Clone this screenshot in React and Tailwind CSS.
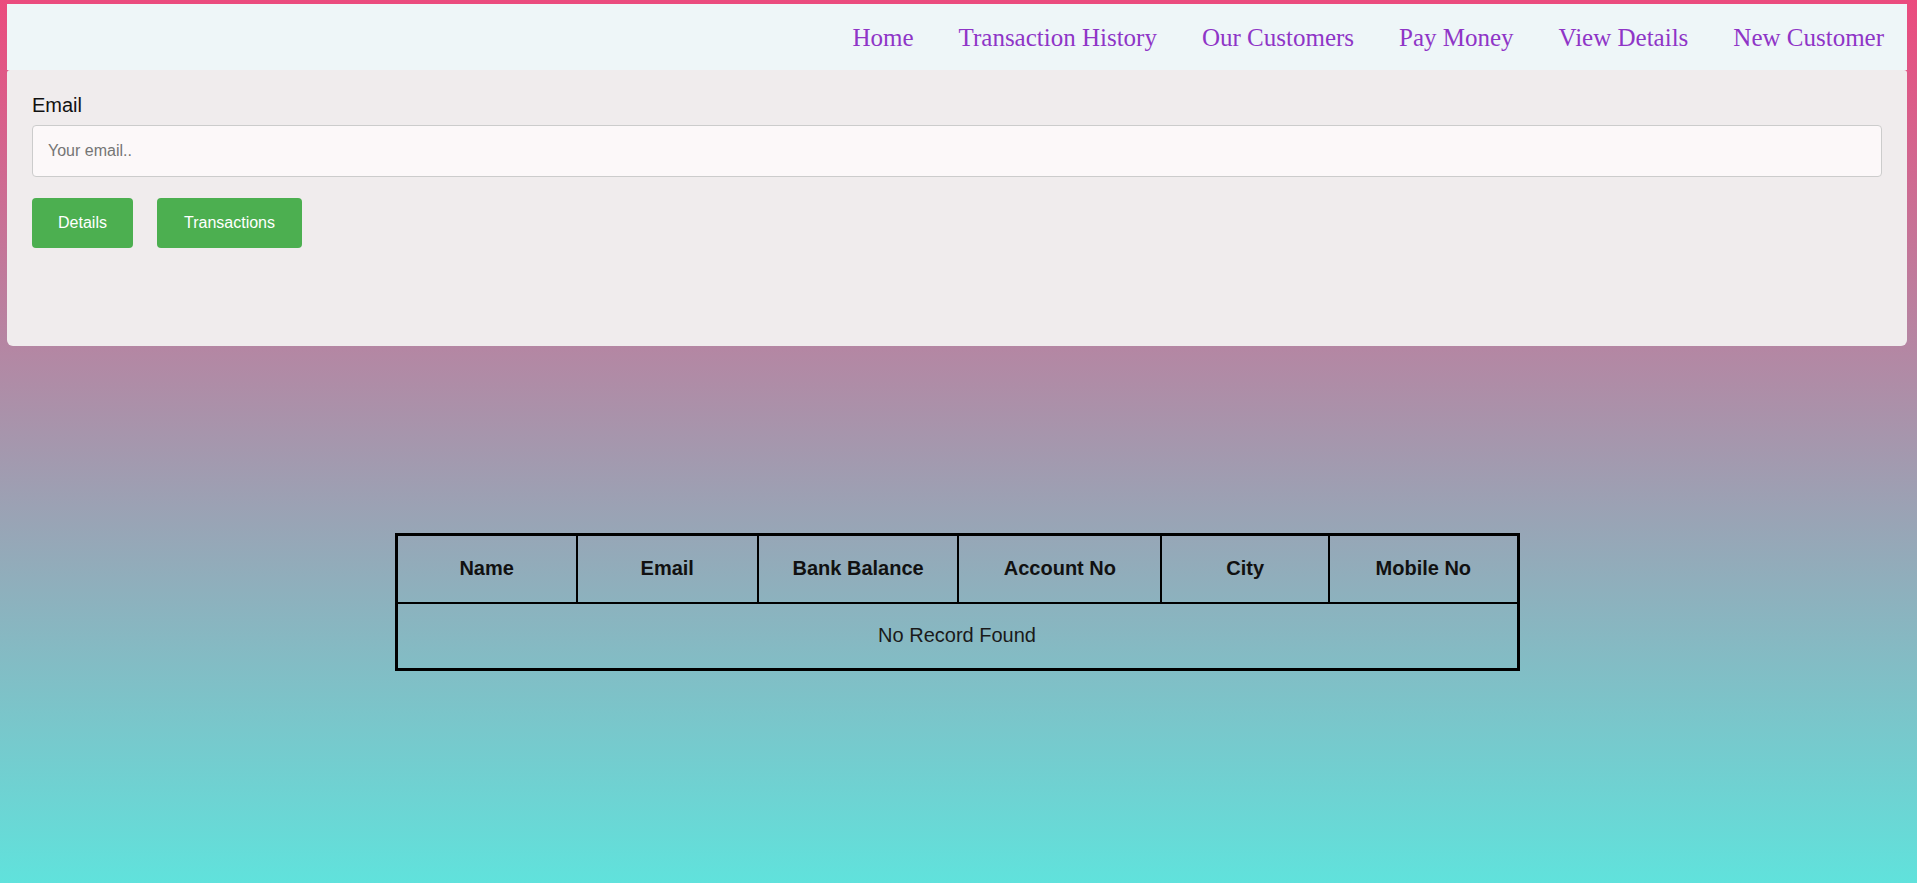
const links = ['Home', 'Transaction History', 'Our Customers', 'Pay Money', 'View Details', 'New Customer'];
const cols = [
  { label: 'Name', w: 'w-[181px]' },
  { label: 'Email', w: 'w-[181px]' },
  { label: 'Bank Balance', w: 'w-[201px]' },
  { label: 'Account No', w: 'w-[203px]' },
  { label: 'City', w: 'w-[168px]' },
  { label: 'Mobile No', w: 'w-[189px]' },
];

const App = () => {
  return (
    <div className="min-h-[883px] bg-[linear-gradient(to_bottom,#eb4b7e,#60e2dc)] pt-[4px] pl-[7px] pr-[10px] font-['Liberation_Sans',Arial,sans-serif]">
      <nav className="h-[66px] bg-[#eef6f8] flex items-center justify-end pr-[23px] pt-[2px]">
        <ul className="flex gap-[45px] font-['Liberation_Serif',serif] text-[25px] text-[#8f35c7]">
          {links.map((l) => (
            <li key={l}><a href="#" className="block">{l}</a></li>
          ))}
        </ul>
      </nav>

      <div className="h-[276px] bg-[#f0eced] rounded-md rounded-t-[3px] px-[25px] pt-[23px]">
        <label className="block text-[20px] text-[#111] leading-[24px] mb-[8px]">Email</label>
        <input
          type="text"
          placeholder="Your email.."
          className="block w-full h-[52px] bg-[#fcf8f9] border border-[#ccc] rounded-[4px] px-[15px] text-[16px] placeholder:text-[#757575] outline-none"
        />
        <div className="flex gap-[24px] mt-[21px]">
          <button className="w-[101px] h-[50px] bg-[#4caf50] text-white text-[16px] rounded-[4px]">Details</button>
          <button className="w-[145px] h-[50px] bg-[#4caf50] text-white text-[16px] rounded-[4px]">Transactions</button>
        </div>
      </div>

      <div className="flex justify-center pt-[187px] pb-[20px]">
        <table className="border-collapse border-[3px] border-black w-[1125px]">
          <thead>
            <tr className="h-[68px]">
              {cols.map((c) => (
                <th key={c.label} className={`${c.w} border-2 border-black text-[20px] font-bold text-[#111] pb-[2px]`}>{c.label}</th>
              ))}
            </tr>
          </thead>
          <tbody>
            <tr className="h-[67px]">
              <td colSpan={6} className="border-2 border-black text-center text-[20px] text-[#1a1a1a] pb-[2px]">No Record Found</td>
            </tr>
          </tbody>
        </table>
      </div>
    </div>
  );
};

export default App;
